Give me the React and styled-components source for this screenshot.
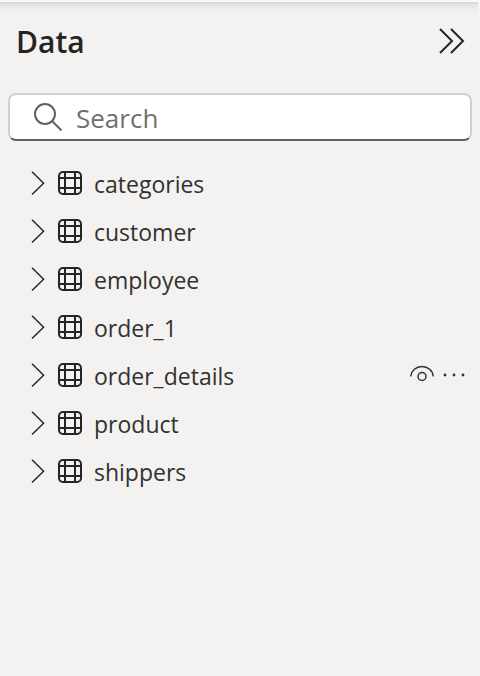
import React, { useState } from "react";
import styled, { createGlobalStyle } from "styled-components";

const GlobalStyle = createGlobalStyle`
  *, *::before, *::after { box-sizing: border-box; }
  body {
    margin: 0;
    background: #f3f2f1;
    color: #252423;
    font-family: "Segoe UI", "Open Sans", "Noto Sans", sans-serif;
  }
`;

const Pane = styled.aside`
  min-height: 100vh;
  border-top: 2px solid #fafafa;
  border-right: 2px solid #f5f4f3;
  background: linear-gradient(#d6d5d4, #e6e5e4 3px, #f0efee 8px, #f3f2f1 12px);
`;

const Header = styled.header`
  display: flex;
  align-items: center;
  justify-content: space-between;
  height: 78px;
  padding: 0 12px 0 16px;
`;

const Title = styled.h1`
  margin: 0;
  padding-top: 2px;
  font-size: 30px;
  line-height: 40px;
  font-weight: 600;
`;

const IconButton = styled.button`
  display: flex;
  flex: none;
  padding: 0;
  border: 0;
  background: none;
  color: inherit;
  cursor: pointer;
`;

const Icon = styled.svg`
  display: block;
  flex: none;
  fill: none;
  stroke: currentColor;
`;

const SearchBox = styled.label`
  display: flex;
  align-items: center;
  gap: 12px;
  height: 48px;
  margin: 13px 6px 0 8px;
  padding: 0 24px;
  border: 2px solid #d1d1d1;
  border-bottom-color: #616161;
  border-radius: 8px;
  background: #fff;
  color: #616161;
`;

const SearchInput = styled.input`
  flex: 1;
  min-width: 0;
  padding: 2px 0 0;
  border: 0;
  outline: 0;
  background: none;
  color: #252423;
  font: inherit;
  font-size: 26px;
  line-height: 40px;
  &::placeholder { color: #707070; opacity: 1; }
`;

const TableList = styled.ul`
  margin: 0;
  padding: 19px 10px 0 31px;
  list-style: none;
`;

const TableRow = styled.li`
  display: flex;
  align-items: center;
  height: 48px;
`;

const Toggle = styled(IconButton)`
  flex: 1;
  align-items: center;
  height: 48px;
  font: inherit;
  font-size: 23px;
  line-height: 32px;
  text-align: left;
`;

const GridIcon = styled(Icon)`
  margin: 0 12px 0 13px;
`;

const TableName = styled.span`
  color: #323130;
`;

const Actions = styled.div`
  display: flex;
  align-items: center;
  gap: 6px;
  color: #323130;
`;

const TABLES = [
  { name: "categories" },
  { name: "customer" },
  { name: "employee" },
  { name: "order_1" },
  { name: "order_details", actions: true },
  { name: "product" },
  { name: "shippers" },
];

function TableItem({ name, actions }) {
  return (
    <TableRow>
      <Toggle type="button" aria-expanded="false">
        <Icon width="14" height="26" viewBox="0 0 14 26" strokeWidth="1.4" aria-hidden="true">
          <path d="M1 .8L12.6 12.2L1 23.6" />
        </Icon>
        <GridIcon width="24" height="26" viewBox="0 0 24 26" strokeWidth="2" aria-hidden="true">
          <rect x="1" y="1" width="22" height="22" rx="4" />
          <path d="M7 1V23M17 1V23M1 7H23M1 17H23" />
        </GridIcon>
        <TableName>{name}</TableName>
      </Toggle>
      {actions && (
        <Actions>
          <IconButton type="button" aria-label="Hide table">
            <Icon width="26" height="22" viewBox="0 0 26 22" strokeWidth="1.5" aria-hidden="true">
              <path d="M.7 11.5C1.2 5.5 6.2 1.5 12 1.5S22.8 5.5 23.3 11.5" />
              <circle cx="12" cy="11.5" r="4" />
            </Icon>
          </IconButton>
          <IconButton type="button" aria-label="More options">
            <Icon width="26" height="22" viewBox="0 0 26 22" aria-hidden="true">
              <g fill="currentColor" stroke="none">
                <circle cx="3" cy="10" r="1.4" />
                <circle cx="12" cy="10" r="1.4" />
                <circle cx="21" cy="10" r="1.4" />
              </g>
            </Icon>
          </IconButton>
        </Actions>
      )}
    </TableRow>
  );
}

export default function App() {
  const [query, setQuery] = useState("");
  const visible = TABLES.filter((t) => t.name.includes(query.toLowerCase()));
  return (
    <>
      <GlobalStyle />
      <Pane>
        <Header>
          <Title>Data</Title>
          <IconButton type="button" aria-label="Collapse pane">
            <Icon width="28" height="26" viewBox="0 0 28 26" strokeWidth="2" aria-hidden="true">
              <path d="M2 1L14 13L2 25M13 1L25 13L13 25" />
            </Icon>
          </IconButton>
        </Header>
        <SearchBox>
          <Icon width="30" height="30" viewBox="0 0 30 30" strokeWidth="2" aria-hidden="true">
            <circle cx="11" cy="12" r="10" />
            <path d="M18 19L27.5 28.5" />
          </Icon>
          <SearchInput
            type="text"
            placeholder="Search"
            aria-label="Search"
            value={query}
            onChange={(e) => setQuery(e.target.value)}
          />
        </SearchBox>
        <TableList>
          {visible.map((t) => (
            <TableItem key={t.name} name={t.name} actions={t.actions} />
          ))}
        </TableList>
      </Pane>
    </>
  );
}
